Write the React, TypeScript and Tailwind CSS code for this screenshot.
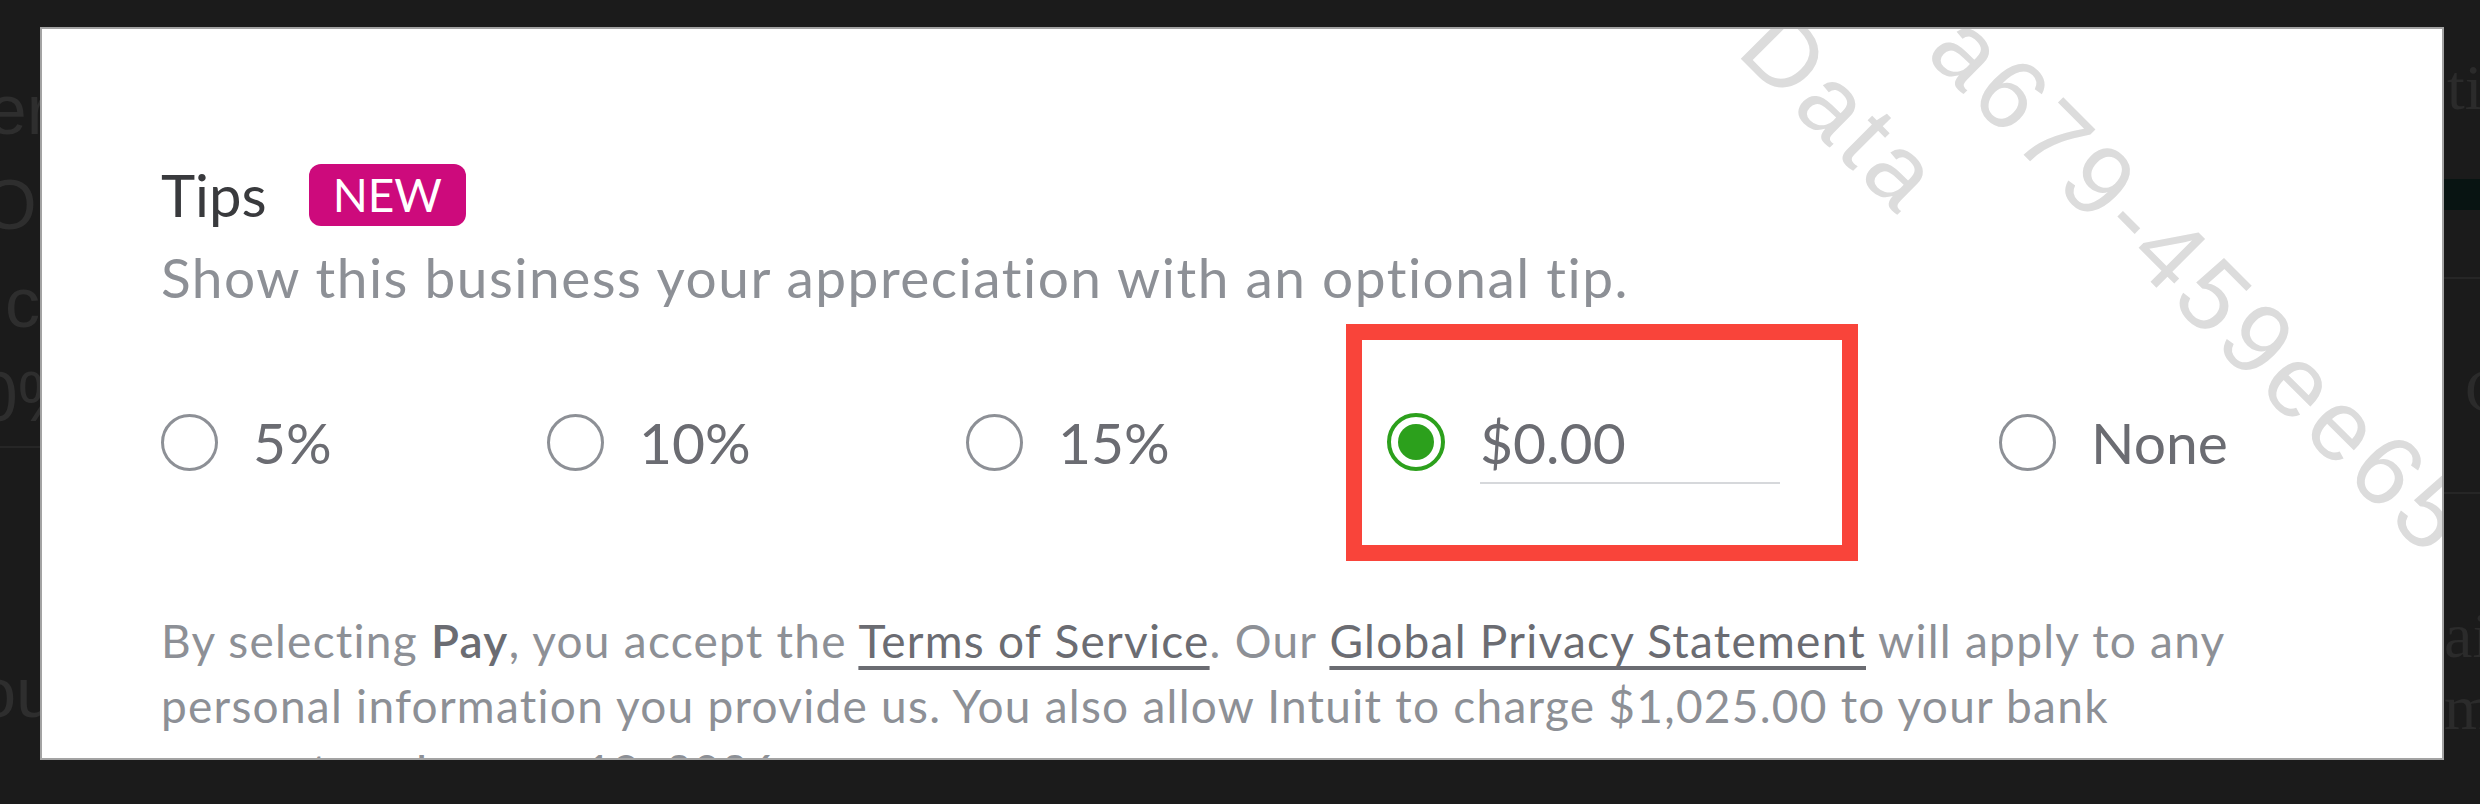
import React from 'react';

const Radio = ({ checked = false }: { checked?: boolean }) =>
  checked ? (
    <span className="flex h-[58px] w-[58px] shrink-0 items-center justify-center rounded-full border-[4px] border-[#2ca01c]">
      <span className="h-[36px] w-[36px] rounded-full bg-[#2ca01c]" />
    </span>
  ) : (
    <span className="h-[57px] w-[57px] shrink-0 rounded-full border-[3px] border-[#8d9096]" />
  );

const TipOption = ({ label, width }: { label: string; width: string }) => (
  <label className={`flex h-[58px] shrink-0 items-center gap-[35px] ${width}`}>
    <Radio />
    <span className="text-[57px] leading-[58px] text-[#6b6c72]">{label}</span>
  </label>
);

const LeftEdge = () => (
  <div className="flex w-[40px] shrink-0 flex-col items-end overflow-hidden whitespace-nowrap font-['Liberation_Sans',Arial,sans-serif] text-[70px] leading-[70px] text-[#2e2e2e]">
    <div className="mt-[75px] -mr-[10px]">Ther</div>
    <div className="mt-[25px] -mr-[20px]">Or</div>
    <div className="mt-[28px]">c</div>
    <div className="mt-[24px] -mr-[40px]">10%</div>
    <div className="mt-[14px] h-[2px] w-full bg-[#262626]" />
    <div className="mt-[210px] -mr-[15px]">you</div>
  </div>
);

const RightEdge = () => (
  <div className="flex min-w-0 flex-1 flex-col overflow-hidden whitespace-nowrap font-['Liberation_Serif',serif] text-[64px] leading-[64px] text-[#2b2b2b]">
    <div className="mt-[56px] pl-[3px]">tion</div>
    <div className="mt-[59px] h-[31px] w-full bg-[#081412]" />
    <div className="mt-[67px] h-[2px] w-full bg-[#262626]" />
    <div className="mt-[80px] pl-[21px] text-[62px] leading-[62px]">C</div>
    <div className="mt-[71px] h-[2px] w-full bg-[#262626]" />
    <div className="mt-[110px]">ail</div>
    <div className="mt-[8px]">m</div>
  </div>
);

const Watermark = () => (
  <div className="pointer-events-none font-['Liberation_Sans',Arial,sans-serif] text-[100px] leading-[100px] tracking-[6px] text-[#dcdcdc]">
    <div className="absolute left-[1753px] top-[-36px] origin-top-left rotate-45 whitespace-nowrap">Data</div>
    <div className="absolute left-[1942px] top-[-34px] origin-top-left rotate-45 whitespace-nowrap">a679-459ee650d</div>
  </div>
);

export default function App() {
  return (
    <div className="flex h-[804px] w-[2480px] overflow-hidden bg-[#1b1b1b]">
      <LeftEdge />

      <div className="relative mt-[27px] h-[733px] w-[2404px] shrink-0 overflow-hidden border-2 border-[#a3a3a3] bg-white pl-[119px] pt-[135px] font-['Lato','Open_Sans',sans-serif]">
        <Watermark />

        <div className="flex h-[62px] items-center">
          <h2 className="text-[58px] leading-[62px] text-[#393a3d]">Tips</h2>
          <span className="ml-[42px] flex h-[62px] items-center rounded-[12px] bg-[#cd0a7c] px-[24px] text-[46px] leading-none text-white">
            NEW
          </span>
        </div>

        <p className="mt-[20px] text-[55px] leading-[62px] tracking-[1.5px] text-[#8d9096]">
          Show this business your appreciation with an optional tip.
        </p>

        <div className="mt-[105px] flex h-[58px] items-start">
          <TipOption label="5%" width="w-[386px]" />
          <TipOption label="10%" width="w-[419px]" />
          <TipOption label="15%" width="w-[421px]" />
          <div className="flex w-[612px] shrink-0 items-start gap-[35px]">
            <Radio checked />
            <div className="flex w-[300px] flex-col">
              <div className="flex h-[58px] items-center text-[57px] leading-[58px] text-[#6b6c72]">$0.00</div>
              <div className="mt-[11px] h-[2px] w-full bg-[#d6d8db]" />
            </div>
          </div>
          <TipOption label="None" width="w-[300px]" />
        </div>

        <p className="mt-[137px] text-[46px] leading-[65px] tracking-[1.25px] text-[#8d9096]">
          By selecting <span className="font-semibold text-[#6b6c72]">Pay</span>, you accept the{' '}
          <a className="text-[#6b6c72] underline underline-offset-[8px]">Terms of Service</a>. Our{' '}
          <a className="text-[#6b6c72] underline underline-offset-[8px]">Global Privacy Statement</a> will apply to any
          <br />
          personal information you provide us. You also allow Intuit to charge $1,025.00 to your bank
          <br />
          account on January 18, 2026.
        </p>

        <div className="pointer-events-none absolute left-[1304px] top-[295px] h-[237px] w-[512px] border-[16px] border-[#f9443a]" />
      </div>

      <RightEdge />
    </div>
  );
}
